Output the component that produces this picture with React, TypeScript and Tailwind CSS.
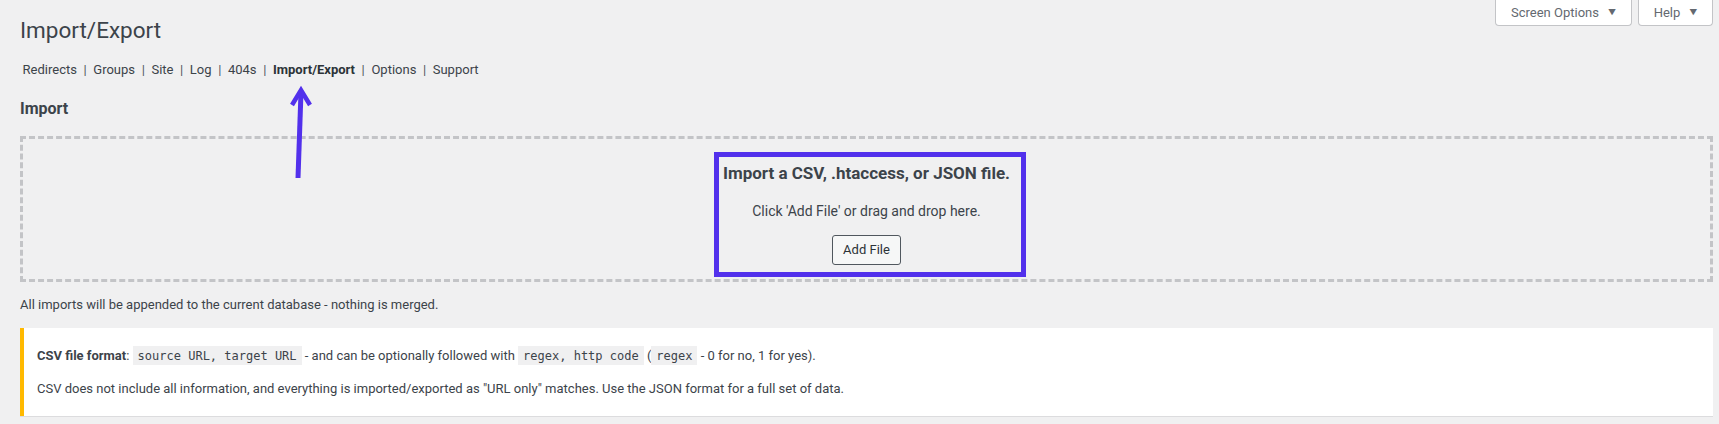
import React from "react";

const navItems = ["Redirects", "Groups", "Site", "Log", "404s", "Import/Export", "Options", "Support"];

function Code({ children }: { children: React.ReactNode }) {
  return (
    <code
      className="bg-[#f0f0f1] px-[5px] pt-[3px] pb-[2px] text-[12px] text-[#3c434a]"
      style={{ fontFamily: '"DejaVu Sans Mono", "Liberation Mono", monospace' }}
    >
      {children}
    </code>
  );
}

export default function App() {
  return (
    <div
      className="relative min-h-[424px] w-full overflow-hidden bg-[#f0f0f1] pl-[20px] pr-[6px] text-[13px] text-[#3c434a]"
      style={{ fontFamily: 'Roboto, Inter, "Liberation Sans", sans-serif' }}
    >
      {/* header */}
      <div className="flex items-start justify-between">
        <h1 className="mt-[16px] text-[22.5px] leading-[29px] font-normal text-[#3c434a]">Import/Export</h1>
        <div className="flex gap-[6px]">
          <button className="flex h-[26px] w-[137px] items-center justify-center gap-[9px] rounded-b-[4px] border border-t-0 border-[#c3c4c7] bg-white text-[13px] text-[#646970]">
            <span>Screen Options</span>
            <span className="text-[8px]">▼</span>
          </button>
          <button className="flex h-[26px] w-[75px] items-center justify-center gap-[9px] rounded-b-[4px] border border-t-0 border-[#c3c4c7] bg-white text-[13px] text-[#646970]">
            <span>Help</span>
            <span className="text-[8px]">▼</span>
          </button>
        </div>
      </div>

      {/* nav */}
      <ul className="mt-[15px] flex h-[20px] items-center leading-[20px] text-[#3c434a]">
        {navItems.map((item, i) => (
          <li key={item} className="flex items-center">
            <a className={"px-[2.6px] " + (item === "Import/Export" ? "font-bold text-[#2c3338]" : "")}>{item}</a>
            {i < navItems.length - 1 && <span className="mx-[4px] text-[#50575e]">|</span>}
          </li>
        ))}
      </ul>

      {/* Import heading */}
      <h2 className="mt-[19px] text-[16px] leading-[20px] font-bold text-[#3c434a]">Import</h2>

      {/* drop zone */}
      <div className="mt-[17px] flex h-[146px] flex-col items-center border-[3px] border-dashed border-[#c3c4c7] pt-[23px]">
        <h3 className="text-[17px] leading-[22px] font-bold text-[#3c434a]">Import a CSV, .htaccess, or JSON file.</h3>
        <p className="mt-[17px] text-[14px] leading-[20px]">Click 'Add File' or drag and drop here.</p>
        <button className="mt-[14px] h-[30px] w-[69px] rounded-[3px] border border-[#50575e] bg-[#f6f7f7] text-[13px] text-[#2c3338]">
          Add File
        </button>
      </div>

      <p className="mt-[13px] leading-[20px]">All imports will be appended to the current database - nothing is merged.</p>

      {/* notice */}
      <div className="mt-[13px] flex h-[88px] flex-col gap-[13px] border-l-4 border-[#ffb900] bg-white pl-[13px] pt-[18px] shadow-[0_1px_0_#dcdcde]">
        <p className="leading-[20px]">
          <strong className="font-bold">CSV file format</strong>: <Code>source URL, target URL</Code> - and can be optionally followed with{" "}
          <Code>regex, http code</Code> (<Code>regex</Code> - 0 for no, 1 for yes).
        </p>
        <p className="leading-[20px]">
          CSV does not include all information, and everything is imported/exported as "URL only" matches. Use the JSON format for a full set of data.
        </p>
      </div>

      {/* annotations */}
      <div className="absolute left-[714px] top-[152px] h-[125px] w-[312px] border-[5px] border-[#5230ec]" />
      <svg className="absolute left-[285px] top-[84px]" width="32" height="100" viewBox="0 0 32 100">
        <line x1="13" y1="94" x2="16" y2="8" stroke="#5230ec" strokeWidth="5" />
        <polyline points="7,21 16,6 25,21" fill="none" stroke="#5230ec" strokeWidth="4.5" strokeLinejoin="miter" />
      </svg>
    </div>
  );
}
